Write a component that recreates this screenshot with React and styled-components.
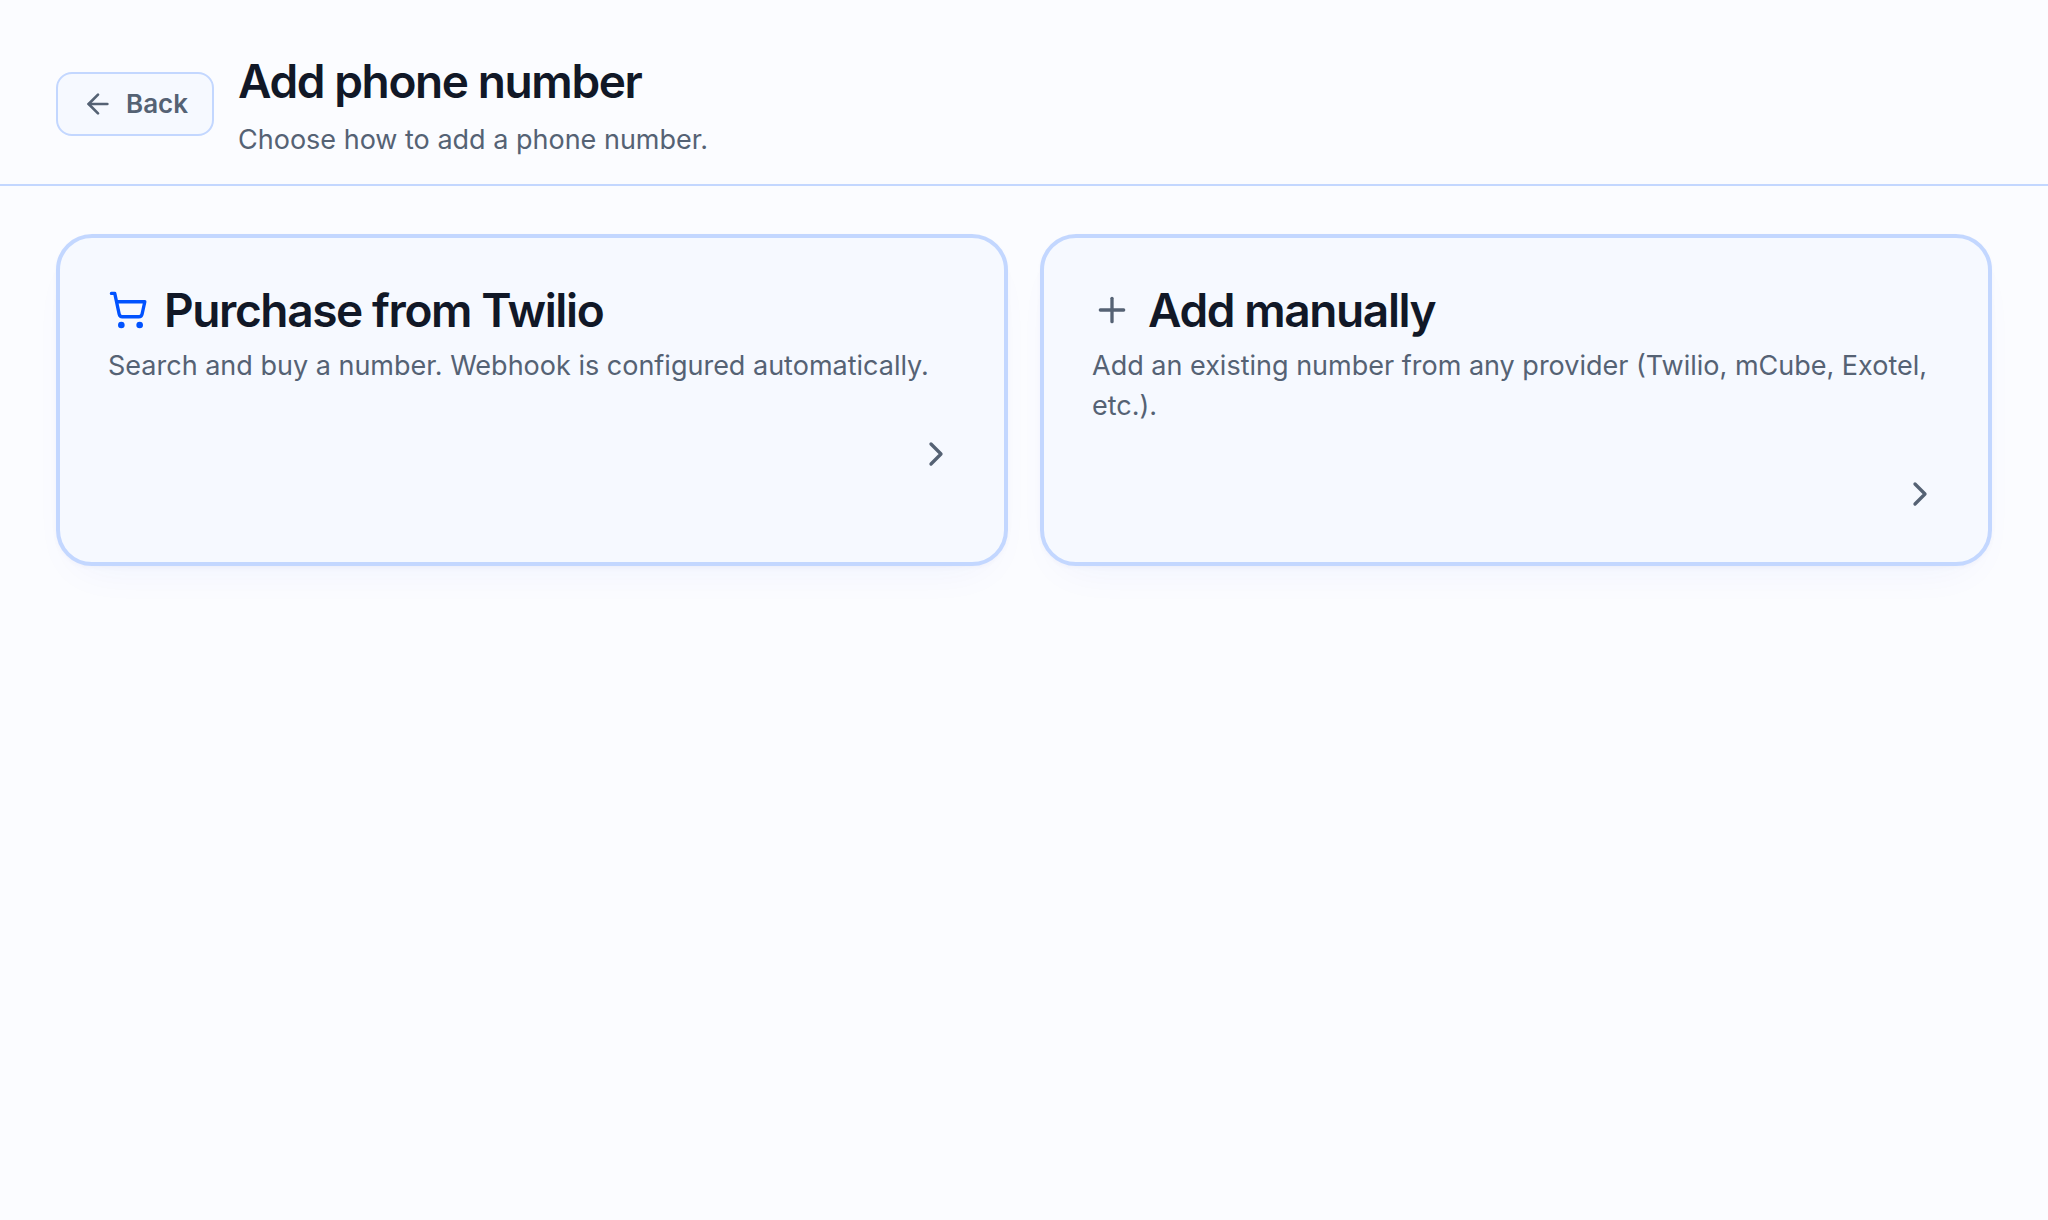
import styled, { createGlobalStyle } from 'styled-components'
import { ArrowLeft, ChevronRight, Plus, ShoppingCart } from 'lucide-react'

const GlobalStyle = createGlobalStyle`
  * {
    box-sizing: border-box;
  }
  body {
    margin: 0;
    background: #fbfcff;
    color: #111827;
    font-family: Inter, "Liberation Sans", sans-serif;
    -webkit-font-smoothing: antialiased;
  }
`

const Header = styled.header`
  display: flex;
  align-items: center;
  gap: 24px;
  padding: 48px 56px 24px;
  border-bottom: 2px solid #c3d7ff;
`

const BackButton = styled.button`
  display: flex;
  align-items: center;
  gap: 12px;
  height: 64px;
  padding: 0 24px;
  border: 2px solid #c3d7ff;
  border-radius: 16px;
  background: #f6f9ff;
  color: #556274;
  font-family: inherit;
  font-size: 26px;
  font-weight: 600;
  line-height: 32px;
  cursor: pointer;
`

const Heading = styled.div`
  display: flex;
  flex-direction: column;
  gap: 6px;
`

const PageTitle = styled.h1`
  margin: 0;
  font-size: 46px;
  font-weight: 600;
  line-height: 66px;
  letter-spacing: -0.03em;
`

const Text = styled.p`
  margin: 0;
  color: #556274;
  font-size: 27px;
  line-height: 40px;
`

const Options = styled.main`
  display: grid;
  grid-template-columns: 1fr 1fr;
  gap: 32px;
  padding: 48px 56px;
`

const Card = styled.button`
  display: flex;
  flex-direction: column;
  padding: 48px;
  border: 4px solid #c3d7ff;
  border-radius: 36px;
  background: #f6f9ff;
  box-shadow: 0 2px 4px rgba(0, 40, 160, 0.03), 0 20px 48px -24px rgba(30, 60, 220, 0.07);
  color: inherit;
  font-family: inherit;
  text-align: left;
  cursor: pointer;
`

const CardTop = styled.div`
  display: flex;
  align-items: center;
  gap: 16px;
  margin-bottom: 12px;
  color: ${(props) => (props.$primary ? '#0052ff' : '#556274')};
`

const CardTitle = styled.h2`
  margin: 0;
  color: #111827;
  font-size: 46px;
  font-weight: 600;
  line-height: 48px;
  letter-spacing: -0.03em;
`

const CardArrow = styled.span`
  display: flex;
  align-self: flex-end;
  margin-top: 48px;
  color: #556274;
`

const options = [
  {
    title: 'Purchase from Twilio',
    text: 'Search and buy a number. Webhook is configured automatically.',
    icon: ShoppingCart,
    primary: true,
  },
  {
    title: 'Add manually',
    text: 'Add an existing number from any provider (Twilio, mCube, Exotel, etc.).',
    icon: Plus,
  },
]

const App = () => {
  return (
    <>
      <GlobalStyle />
      <Header>
        <BackButton type="button">
          <ArrowLeft size={32} />
          Back
        </BackButton>
        <Heading>
          <PageTitle>Add phone number</PageTitle>
          <Text>Choose how to add a phone number.</Text>
        </Heading>
      </Header>
      <Options>
        {options.map(({ title, text, icon: Icon, primary }) => (
          <Card type="button" key={title}>
            <CardTop $primary={primary}>
              <Icon size={40} />
              <CardTitle>{title}</CardTitle>
            </CardTop>
            <Text>{text}</Text>
            <CardArrow>
              <ChevronRight size={40} />
            </CardArrow>
          </Card>
        ))}
      </Options>
    </>
  )
}

export default App
